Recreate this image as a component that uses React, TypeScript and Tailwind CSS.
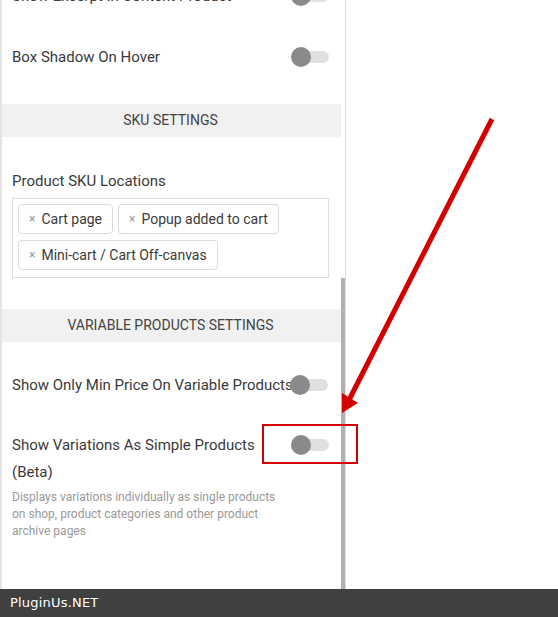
import React from "react";

function Toggle({ className = "" }: { className?: string }) {
  return (
    <div className={"relative h-[20px] w-[38px] shrink-0 " + className}>
      <div className="absolute left-[1px] right-0 top-[4px] h-[12px] rounded-full bg-[#e0e0e0]" />
      <div className="absolute left-0 top-0 h-[20px] w-[20px] rounded-full bg-[#8a8a8a]" />
    </div>
  );
}

function Chip({ label }: { label: string }) {
  return (
    <div className="flex h-[30px] items-center rounded-[4px] border border-[#dcdcdc] bg-white pl-[10px] pr-[10px] text-[14px] text-[#3a3a3a]">
      <span className="mr-[6px] text-[12px] leading-none text-[#999]">×</span>
      <span>{label}</span>
    </div>
  );
}

function Header({ title }: { title: string }) {
  return (
    <div className="flex h-[33px] w-[341px] items-center justify-center bg-[#f1f1f1] text-[14px] uppercase text-[#444]">
      {title}
    </div>
  );
}

export default function App() {
  return (
    <div
      className="relative h-[617px] w-[558px] overflow-hidden bg-white"
      style={{ fontFamily: "Roboto, 'Liberation Sans', sans-serif" }}
    >
      <div className="flex h-[589px]">
        <div className="relative h-[589px] w-[346px] shrink-0 overflow-hidden border-l-2 border-r border-[#e4e4e4] border-r-[#dedede]">
          <div className="absolute right-0 top-[278px] h-[311px] w-[4px] bg-[#b0b0b0]" />
          <div className="ml-[-2px] mt-[-34px] flex w-[341px] flex-col">
            <div className="flex h-[60px] items-center pl-[12px] text-[15px] text-[#3a3a3a]">
              <div className="w-[279px]">Show Excerpt In Content Product</div>
              <Toggle />
            </div>
            <div className="flex h-[62px] items-center pl-[12px] text-[15px] text-[#3a3a3a]">
              <div className="w-[279px]">Box Shadow On Hover</div>
              <Toggle />
            </div>
            <div className="mt-[16px]">
              <Header title="SKU Settings" />
            </div>
            <div className="mt-[34px] pl-[12px] text-[15px] leading-[20px] text-[#3a3a3a]">
              Product SKU Locations
            </div>
            <div className="ml-[12px] mt-[7px] flex h-[80px] w-[317px] flex-wrap content-start gap-x-[5px] gap-y-[6px] border border-[#dedede] pl-[5px] pt-[5px]">
              <Chip label="Cart page" />
              <Chip label="Popup added to cart" />
              <Chip label="Mini-cart / Cart Off-canvas" />
            </div>
            <div className="mt-[31px]">
              <Header title="Variable Products Settings" />
            </div>
            <div className="mt-[33px] flex h-[20px] items-center pl-[12px] text-[15px] leading-[20px] text-[#3a3a3a]">
              <div className="w-[279px] whitespace-nowrap">Show Only Min Price On Variable Products</div>
              <Toggle className="ml-[-1px]" />
            </div>
            <div className="mt-[37px] flex items-start pl-[12px]">
              <div className="w-[279px]">
                <div className="text-[15px] leading-[27px] text-[#3a3a3a]">
                  Show Variations As Simple Products (Beta)
                </div>
                <div className="mt-[3px] text-[12px] leading-[17px] text-[#999]">
                  Displays variations individually as single products on shop, product categories and other product archive pages
                </div>
              </div>
              <Toggle className="mt-[3px]" />
            </div>
          </div>
        </div>
        <div className="flex-1" />
      </div>
      <div
        className="flex h-[28px] items-center bg-[#404040] pl-[10px] text-[13px] tracking-[0.2px] text-white"
        style={{ fontFamily: "'DejaVu Sans', sans-serif" }}
      >
        PluginUs.NET
      </div>

      <div className="pointer-events-none absolute left-[262px] top-[424px] h-[40px] w-[96px] border-2 border-[#d40000]" />
      <svg className="pointer-events-none absolute left-0 top-0" width="558" height="617">
        <line x1="492" y1="119" x2="349" y2="400" stroke="#d40000" strokeWidth="5" />
        <polygon points="342,413 342,393 358,403" fill="#d40000" />
      </svg>
    </div>
  );
}
